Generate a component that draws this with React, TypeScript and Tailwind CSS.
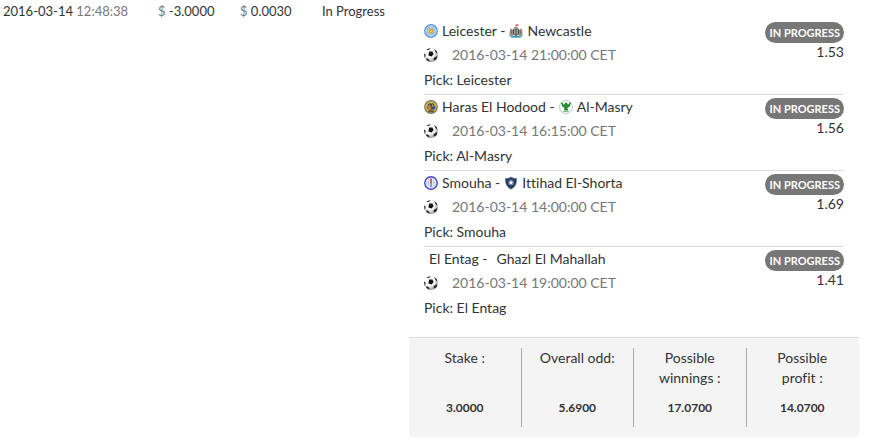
import type { ReactNode } from 'react';

const LeicesterCrest = () => (
  <svg viewBox="0 0 14 14" className="w-3.5 h-3.5">
    <circle cx="7" cy="7" r="6.9" fill="#5c95cf" />
    <circle cx="7" cy="7" r="5.2" fill="#8fbde6" stroke="#cfe2f3" strokeWidth="0.8" />
    <path d="M7 2v10M2 7h10M3.4 3.4l7.2 7.2M10.6 3.4l-7.2 7.2" stroke="#e3f0fa" strokeWidth="0.7" />
    <path d="M7 3.8l1 1.5 2-.5-.8 2 .6 2L8 9l-1 1.4L6 9l-1.8-.2.6-2-.8-2 2 .5z" fill="#e0a92f" />
    <circle cx="7" cy="7.2" r="0.9" fill="#f6d98a" />
  </svg>
);

const NewcastleCrest = () => (
  <svg viewBox="0 0 14 14" className="w-3.5 h-3.5">
    <path d="M7 0v4" stroke="#777" strokeWidth="0.6" />
    <path d="M7.2 0l3.2 1.1-3.2 1.2z" fill="#d0444c" />
    <path d="M4.8 3h4.4v2.5H4.8z" fill="#9a9590" />
    <path d="M1.4 4.6l2 .4.9 2.2V12L.4 11.2l.2-3.6zM12.6 4.6l-2 .4-.9 2.2V12l3.9-.8-.2-3.6z" fill="#a39480" />
    <path d="M1.4 6.5l1.4 1-.8 2.3M12.6 6.5l-1.4 1 .8 2.3" stroke="#5d544a" strokeWidth="0.7" fill="none" />
    <path d="M4 5.2h6v4.6c0 1-1.4 1.7-3 2.2-1.6-.5-3-1.2-3-2.2z" fill="#33373c" />
    <path d="M5.4 5.6v5M7 5.6v5.6M8.6 5.6v5" stroke="#e4e6e8" strokeWidth="0.7" />
    <path d="M.4 10.8c2.2 1.4 4.4 1.4 6.6 1 2.2.4 4.4.4 6.6-1l-1.2 2.4C9 14 5 14 1.6 13.2z" fill="#3f9fb8" />
  </svg>
);

const HarasCrest = () => (
  <svg viewBox="0 0 14 14" className="w-3.5 h-3.5">
    <circle cx="7" cy="7" r="6.3" fill="#d6bb3c" stroke="#77776f" strokeWidth="1.2" />
    <path d="M3.6 4.4l1.7-1.5 1.7.8 1.7-.8 1.7 1.5-.5 2H4.1z" fill="#4a4a66" />
    <path d="M2.8 6.2h3.8v2.6H2.8z" fill="#a65a2c" />
    <path d="M7 6.2h4.2v3H7z" fill="#2f4aa0" />
    <path d="M3.8 9.2h6.4l-1.2 2H5z" fill="#8b5a3a" />
    <path d="M5.2 4.6v4.6M8.6 4.4v2.4" stroke="#ecd052" strokeWidth="0.7" />
    <path d="M4 11.7h6" stroke="#333" strokeWidth="0.8" />
  </svg>
);

const MasryCrest = () => (
  <svg viewBox="0 0 14 14" className="w-3.5 h-3.5">
    <circle cx="7" cy="7" r="6.5" fill="#fbfdfb" stroke="#a9cbac" strokeWidth="0.9" />
    <path
      d="M2.2 2c-.1 1.6.2 2.6 1 3.2l-.4.4C3.4 7 4.4 7.7 5.7 7.8L4.6 10.6h4.8L8.3 7.8c1.3-.1 2.3-.8 2.9-2.2l-.4-.4c.8-.6 1.1-1.6 1-3.2-1.3.8-2.1 1.7-2.7 2.9L7.9 2.8H6.1L4.9 4.9C4.3 3.7 3.5 2.8 2.2 2z"
      fill="#2b8a31"
    />
    <path d="M4.2 11.5h5.6" stroke="#69ad6e" strokeWidth="0.8" />
  </svg>
);

const SmouhaCrest = () => (
  <svg viewBox="0 0 14 14" className="w-3.5 h-3.5">
    <circle cx="7" cy="7" r="6.2" fill="#f2f5fd" stroke="#3f45cf" strokeWidth="1.4" />
    <circle cx="7" cy="7" r="4.2" fill="#eef3fb" stroke="#a9b4ec" strokeWidth="0.6" />
    <path d="M7 6v5" stroke="#3b7a9a" strokeWidth="1.2" />
    <path d="M7 2.4v4.4" stroke="#d8242c" strokeWidth="1.4" />
    <path d="M4.6 5v3.8M9.4 5v3.8" stroke="#7fb3c9" strokeWidth="0.8" />
  </svg>
);

const IttihadCrest = () => (
  <svg viewBox="0 0 14 14" className="w-3.5 h-3.5">
    <path d="M1.3 2.3C3.5 2.6 5 2 7 1c2 1 3.5 1.6 5.7 1.3.2 5.2-1.3 8.6-5.7 10.9C2.6 10.9 1.1 7.5 1.3 2.3z" fill="#24385c" stroke="#7f8ca4" strokeWidth="0.7" />
    <circle cx="7" cy="6.6" r="3" fill="#5f779c" />
    <path d="M7 4.2l.7 1.6 1.7.1-1.3 1.1.4 1.7L7 7.8l-1.5.9.4-1.7-1.3-1.1 1.7-.1z" fill="#f2f5f9" />
  </svg>
);

const SoccerBall = () => (
  <svg viewBox="0 0 14 14" className="w-3.5 h-3.5">
    <defs>
      <radialGradient id="ball" cx="0.4" cy="0.35" r="0.7">
        <stop offset="0.5" stopColor="#f8f8f8" />
        <stop offset="1" stopColor="#8f8f8f" />
      </radialGradient>
    </defs>
    <circle cx="7" cy="7" r="6.9" fill="url(#ball)" />
    <path d="M5.2 3.6l3.2-.2 1.2 2.6-2 2.4-3.2-.9z" fill="#111" />
    <path d="M2.4 2l2.4-1.6 2 .1L4.6 2zM.1 6.2l1-.9.5 2.6-.9 2zM10.2.9l2.6 2.4.6 2.4-1.9-1.6zM2.2 10.4l2.2.4 1.4 2.6-1.6-.2-2-1.8zM9.4 10.4l2.6-2 1.4.2-1.2 2.8-2 1.2z" fill="#222" />
  </svg>
);

type Match = {
  home: string;
  away: string;
  homeCrest?: ReactNode;
  awayCrest?: ReactNode;
  date: string;
  pick: string;
  odd: string;
};

const matches: Match[] = [
  {
    home: 'Leicester',
    away: 'Newcastle',
    homeCrest: <LeicesterCrest />,
    awayCrest: <NewcastleCrest />,
    date: '2016-03-14 21:00:00 CET',
    pick: 'Leicester',
    odd: '1.53',
  },
  {
    home: 'Haras El Hodood',
    away: 'Al-Masry',
    homeCrest: <HarasCrest />,
    awayCrest: <MasryCrest />,
    date: '2016-03-14 16:15:00 CET',
    pick: 'Al-Masry',
    odd: '1.56',
  },
  {
    home: 'Smouha',
    away: 'Ittihad El-Shorta',
    homeCrest: <SmouhaCrest />,
    awayCrest: <IttihadCrest />,
    date: '2016-03-14 14:00:00 CET',
    pick: 'Smouha',
    odd: '1.69',
  },
  { home: 'El Entag', away: 'Ghazl El Mahallah', date: '2016-03-14 19:00:00 CET', pick: 'El Entag', odd: '1.41' },
];

const totals = [
  { label: 'Stake :', value: '3.0000' },
  { label: 'Overall odd:', value: '5.6900' },
  { label: 'Possible winnings :', value: '17.0700' },
  { label: 'Possible profit :', value: '14.0700' },
];

const MatchRow = ({ match }: { match: Match }) => (
  <li className="flex justify-between border-b border-[#ddd] last:border-transparent">
    <div className="pb-px leading-6">
      <div className="flex items-center gap-1">
        {match.homeCrest ?? <span className="w-px" />}
        <span>{match.home} -</span>
        {match.awayCrest ?? <span className="w-px" />}
        <span>{match.away}</span>
      </div>
      <div className="flex items-center gap-3.5 text-[#777]">
        <SoccerBall />
        <span>{match.date}</span>
      </div>
      <p className="leading-[26px]">Pick: {match.pick}</p>
    </div>
    <div className="flex flex-col items-end pt-[3px]">
      <span className="rounded-full bg-[#777] px-1 text-[11px] leading-[21px] font-bold text-white">IN PROGRESS</span>
      <span className="leading-[18px]">{match.odd}</span>
    </div>
  </li>
);

const App = () => (
  <table className="w-full table-fixed bg-white font-['Lato',sans-serif] text-[13px] text-[#333] [font-variant-ligatures:none]">
    <colgroup>
      <col className="w-[155px]" />
      <col className="w-[82px]" />
      <col className="w-[82px]" />
      <col className="w-[90px]" />
      <col />
    </colgroup>
    <tbody>
      <tr className="align-top">
        <td className="pt-px pl-[3px] leading-5">
          2016-03-14 <span className="text-[#777]">12:48:38</span>
        </td>
        <td className="pt-px pl-[3px] leading-5">
          <span className="text-[#777]">$</span> -3.0000
        </td>
        <td className="pt-px pl-[3px] leading-5">
          <span className="text-[#777]">$</span> 0.0030
        </td>
        <td className="pt-px pl-[3px] leading-5">In Progress</td>
        <td className="pt-[19px] pr-[30px] text-sm">
          <ul className="px-[15px]">
            {matches.map((match) => (
              <MatchRow key={match.home} match={match} />
            ))}
          </ul>

          {/* Ticket totals */}
          <dl className="mt-3.5 grid grid-cols-4 rounded-b border-t border-[#ddd] bg-[#f4f4f4] py-2.5 text-center">
            {totals.map((total) => (
              <div key={total.label} className="flex flex-col border-r border-[#aaa] px-4 pb-[9px] last:border-transparent">
                <dt className="h-[50px] leading-5">{total.label}</dt>
                <dd className="text-xs leading-5 font-bold">{total.value}</dd>
              </div>
            ))}
          </dl>
        </td>
      </tr>
    </tbody>
  </table>
);

export default App;
